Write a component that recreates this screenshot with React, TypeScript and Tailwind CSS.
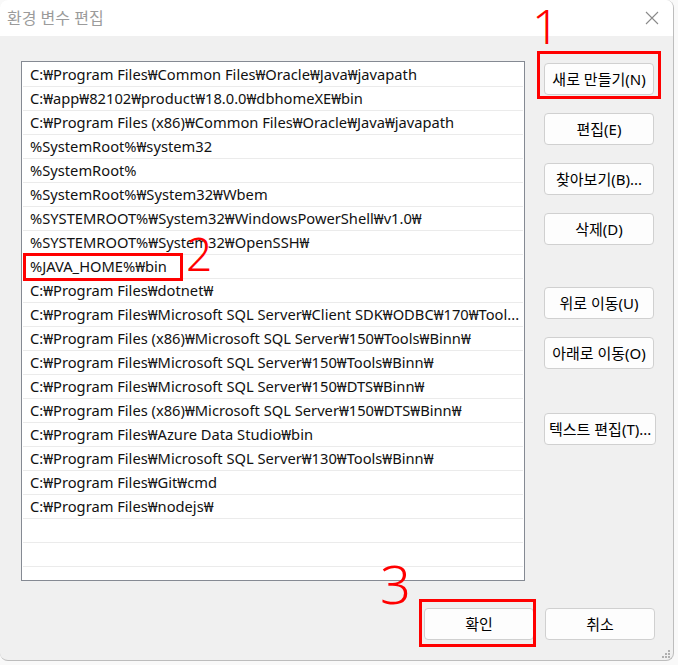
import React from 'react';

const paths = [
  'C:₩Program Files₩Common Files₩Oracle₩Java₩javapath',
  'C:₩app₩82102₩product₩18.0.0₩dbhomeXE₩bin',
  'C:₩Program Files (x86)₩Common Files₩Oracle₩Java₩javapath',
  '%SystemRoot%₩system32',
  '%SystemRoot%',
  '%SystemRoot%₩System32₩Wbem',
  '%SYSTEMROOT%₩System32₩WindowsPowerShell₩v1.0₩',
  '%SYSTEMROOT%₩System32₩OpenSSH₩',
  '%JAVA_HOME%₩bin',
  'C:₩Program Files₩dotnet₩',
  'C:₩Program Files₩Microsoft SQL Server₩Client SDK₩ODBC₩170₩Tool...',
  'C:₩Program Files (x86)₩Microsoft SQL Server₩150₩Tools₩Binn₩',
  'C:₩Program Files₩Microsoft SQL Server₩150₩Tools₩Binn₩',
  'C:₩Program Files₩Microsoft SQL Server₩150₩DTS₩Binn₩',
  'C:₩Program Files (x86)₩Microsoft SQL Server₩150₩DTS₩Binn₩',
  'C:₩Program Files₩Azure Data Studio₩bin',
  'C:₩Program Files₩Microsoft SQL Server₩130₩Tools₩Binn₩',
  'C:₩Program Files₩Git₩cmd',
  'C:₩Program Files₩nodejs₩',
  '',
  '',
];

function Btn({ label, className = '' }: { label: string; className?: string }) {
  return (
    <button
      className={`h-[32px] min-w-[110px] px-1 rounded-[4px] border border-[#d0d0d0] bg-[#fdfdfd] text-[15px] text-black whitespace-nowrap ${className}`}
    >
      {label}
    </button>
  );
}

export default function App() {
  return (
    <div
      className="relative w-[678px] h-[665px] bg-[#f9f9f9] overflow-hidden"
      style={{ fontFamily: '"Noto Sans", "Noto Sans CJK KR", sans-serif' }}
    >
      <div className="w-[674px] h-[661px] rounded-[8px] bg-[#f0f0f0] border-r border-b border-[#bdbdbd] flex flex-col overflow-hidden">
        {/* title bar */}
        <div className="h-[36px] bg-white flex items-center justify-between pl-[7px] pr-[14px]">
          <span className="text-[16px] text-[#9b9b9b]">환경 변수 편집</span>
          <svg width="14" height="14" viewBox="0 0 14 14">
            <path d="M1 1 L13 13 M13 1 L1 13" stroke="#8a8a8a" strokeWidth="1.1" />
          </svg>
        </div>

        {/* body */}
        <div className="flex pt-[25px] pl-[21px]">
          <div className="w-[504px] h-[520px] border border-[#858a93] bg-white pt-[1px] px-[1px] overflow-hidden">
            {paths.map((p, i) => (
              <div
                key={i}
                className="h-[24px] border-b border-[#ebebeb] pl-[7px] flex items-center text-[14.7px] text-[#111] whitespace-nowrap overflow-hidden"
              >
                {p}
              </div>
            ))}
          </div>

          <div className="flex flex-col items-start pl-[19px] pt-[2px]">
            <Btn label="새로 만들기(N)" />
            <Btn label="편집(E)" className="mt-[18px]" />
            <Btn label="찾아보기(B)..." className="mt-[18px]" />
            <Btn label="삭제(D)" className="mt-[18px]" />
            <Btn label="위로 이동(U)" className="mt-[42px]" />
            <Btn label="아래로 이동(O)" className="mt-[18px]" />
            <Btn label="텍스트 편집(T)..." className="mt-[44px]" />
          </div>
        </div>

        <div className="flex justify-end gap-[11px] pt-[27px] pr-[18px]">
          <Btn label="확인" />
          <Btn label="취소" />
        </div>
      </div>

      {/* resize grip */}
      <div className="absolute right-[8px] bottom-[7px] grid grid-cols-3 gap-[1px]">
        <span className="w-[2px] h-[2px]" />
        <span className="w-[2px] h-[2px]" />
        <span className="w-[2px] h-[2px] bg-[#b0b0b0]" />
        <span className="w-[2px] h-[2px]" />
        <span className="w-[2px] h-[2px] bg-[#b0b0b0]" />
        <span className="w-[2px] h-[2px] bg-[#b0b0b0]" />
        <span className="w-[2px] h-[2px] bg-[#b0b0b0]" />
        <span className="w-[2px] h-[2px] bg-[#b0b0b0]" />
        <span className="w-[2px] h-[2px] bg-[#b0b0b0]" />
      </div>

      {/* red annotations */}
      <div className="absolute left-[537px] top-[51px] w-[124px] h-[48px] border-[3px] border-[#ff0000]" />
      <div className="absolute left-[23px] top-[253px] w-[160px] h-[28px] border-[3px] border-[#ff0000]" />
      <div className="absolute left-[419px] top-[599px] w-[117px] h-[48px] border-[3px] border-[#ff0000]" />
      <span className="absolute left-[532px] top-[2px] text-[48px] leading-none text-[#ff0000] font-light">1</span>
      <span className="absolute left-[186px] top-[230px] text-[46px] leading-none text-[#ff0000] font-light">2</span>
      <span className="absolute left-[380px] top-[556px] text-[54px] leading-none text-[#ff0000] font-light">3</span>
    </div>
  );
}
